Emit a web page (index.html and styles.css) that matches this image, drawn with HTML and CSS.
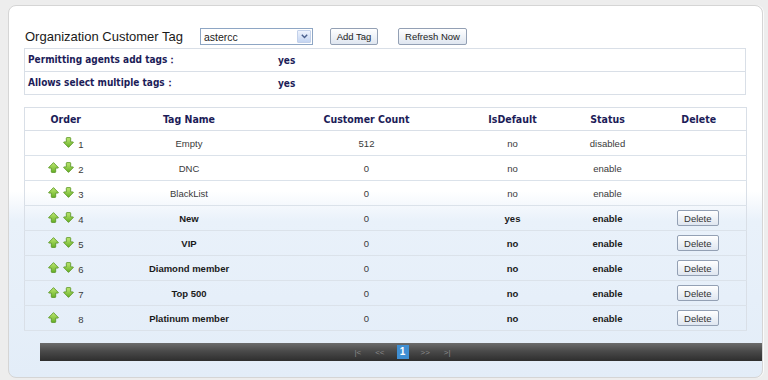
FILE: index.html
```html
<!DOCTYPE html>
<html>
<head>
  <meta charset="utf-8">
  <link rel="stylesheet" href="styles.css">
</head>
<body>
  <svg class="svg-defs" width="0" height="0">
    <defs>
      <linearGradient id="greenFill" x1="0" y1="0" x2="0" y2="1">
        <stop offset="0" stop-color="#bfe873"/>
        <stop offset="1" stop-color="#66b026"/>
      </linearGradient>
      <symbol id="arrowUp" viewBox="0 0 11 11">
        <path d="M5.5 0.6 L10.3 5.5 Q10.5 6.1 9.9 6.1 H7.7 V9.8 Q7.7 10.4 7.1 10.4 H3.9 Q3.3 10.4 3.3 9.8 V6.1 H1.1 Q0.5 6.1 0.7 5.5 Z" fill="url(#greenFill)" stroke="#54921f" stroke-width="0.8"/>
      </symbol>
      <symbol id="arrowDown" viewBox="0 0 11 11">
        <path d="M5.5 10.4 L10.3 5.5 Q10.5 4.9 9.9 4.9 H7.7 V1.2 Q7.7 0.6 7.1 0.6 H3.9 Q3.3 0.6 3.3 1.2 V4.9 H1.1 Q0.5 4.9 0.7 5.5 Z" fill="url(#greenFill)" stroke="#54921f" stroke-width="0.8"/>
      </symbol>
    </defs>
  </svg>

  <div class="panel">
    <div class="toolbar">
      <span class="title">Organization Customer Tag</span>
      <div class="select-box">
        <span class="select-text">astercc</span>
        <span class="select-arrow">
          <svg width="7" height="5" viewBox="0 0 7 5"><path d="M0.8 0.8 L3.5 3.6 L6.2 0.8" fill="none" stroke="#4a5f8c" stroke-width="1.4"/></svg>
        </span>
      </div>
      <button class="btn add-btn">Add Tag</button>
      <button class="btn refresh-btn">Refresh Now</button>
    </div>

    <table class="info-table">
      <tr>
        <td class="info-label">Permitting agents add tags：</td>
        <td class="info-value">yes</td>
      </tr>
      <tr>
        <td class="info-label">Allows select multiple tags：</td>
        <td class="info-value">yes</td>
      </tr>
    </table>

    <table class="tag-table">
      <colgroup>
        <col class="col-order">
        <col class="col-name">
        <col class="col-count">
        <col class="col-default">
        <col class="col-status">
        <col class="col-delete">
      </colgroup>
      <thead>
        <tr>
          <th>Order</th>
          <th>Tag Name</th>
          <th>Customer Count</th>
          <th>IsDefault</th>
          <th>Status</th>
          <th>Delete</th>
        </tr>
      </thead>
      <tbody>
        <tr>
          <td><span class="order-box"><span class="slot"></span><span class="slot"><svg width="11" height="11"><use href="#arrowDown"/></svg></span><span class="num">1</span></span></td>
          <td>Empty</td>
          <td>512</td>
          <td>no</td>
          <td>disabled</td>
          <td></td>
        </tr>
        <tr>
          <td><span class="order-box"><span class="slot"><svg width="11" height="11"><use href="#arrowUp"/></svg></span><span class="slot"><svg width="11" height="11"><use href="#arrowDown"/></svg></span><span class="num">2</span></span></td>
          <td>DNC</td>
          <td>0</td>
          <td>no</td>
          <td>enable</td>
          <td></td>
        </tr>
        <tr>
          <td><span class="order-box"><span class="slot"><svg width="11" height="11"><use href="#arrowUp"/></svg></span><span class="slot"><svg width="11" height="11"><use href="#arrowDown"/></svg></span><span class="num">3</span></span></td>
          <td>BlackList</td>
          <td>0</td>
          <td>no</td>
          <td>enable</td>
          <td></td>
        </tr>
        <tr>
          <td><span class="order-box"><span class="slot"><svg width="11" height="11"><use href="#arrowUp"/></svg></span><span class="slot"><svg width="11" height="11"><use href="#arrowDown"/></svg></span><span class="num">4</span></span></td>
          <td class="strong">New</td>
          <td>0</td>
          <td class="strong">yes</td>
          <td class="strong">enable</td>
          <td><button class="btn delete-btn">Delete</button></td>
        </tr>
        <tr>
          <td><span class="order-box"><span class="slot"><svg width="11" height="11"><use href="#arrowUp"/></svg></span><span class="slot"><svg width="11" height="11"><use href="#arrowDown"/></svg></span><span class="num">5</span></span></td>
          <td class="strong">VIP</td>
          <td>0</td>
          <td class="strong">no</td>
          <td class="strong">enable</td>
          <td><button class="btn delete-btn">Delete</button></td>
        </tr>
        <tr>
          <td><span class="order-box"><span class="slot"><svg width="11" height="11"><use href="#arrowUp"/></svg></span><span class="slot"><svg width="11" height="11"><use href="#arrowDown"/></svg></span><span class="num">6</span></span></td>
          <td class="strong">Diamond member</td>
          <td>0</td>
          <td class="strong">no</td>
          <td class="strong">enable</td>
          <td><button class="btn delete-btn">Delete</button></td>
        </tr>
        <tr>
          <td><span class="order-box"><span class="slot"><svg width="11" height="11"><use href="#arrowUp"/></svg></span><span class="slot"><svg width="11" height="11"><use href="#arrowDown"/></svg></span><span class="num">7</span></span></td>
          <td class="strong">Top 500</td>
          <td>0</td>
          <td class="strong">no</td>
          <td class="strong">enable</td>
          <td><button class="btn delete-btn">Delete</button></td>
        </tr>
        <tr>
          <td><span class="order-box"><span class="slot"><svg width="11" height="11"><use href="#arrowUp"/></svg></span><span class="slot"></span><span class="num">8</span></span></td>
          <td class="strong">Platinum member</td>
          <td>0</td>
          <td class="strong">no</td>
          <td class="strong">enable</td>
          <td><button class="btn delete-btn">Delete</button></td>
        </tr>
      </tbody>
    </table>

    <div class="pager">
      <span class="pager-link">|&lt;</span>
      <span class="pager-link">&lt;&lt;</span>
      <span class="pager-current">1</span>
      <span class="pager-link">&gt;&gt;</span>
      <span class="pager-link">&gt;|</span>
    </div>
  </div>
</body>
</html>
```

FILE: styles.css
```css
body {
  margin: 0;
  padding: 5px 6px 3px 8px;
  background: #ededed;
  font-family: "Liberation Sans", Arial, sans-serif;
  font-size: 9.5px;
  color: #3a3a3a;
}

.svg-defs {
  display: block;
  width: 0;
  height: 0;
}

.panel {
  width: 722px;
  height: 349px;
  padding: 22px 16px 0 15px;
  border: 1px solid #d5d5d5;
  border-radius: 8px;
  background: linear-gradient(to bottom, #ffffff 0, #ffffff 185px, #e9f1fa 215px, #e3edf8 100%);
  box-shadow: 1px 0 0 #fbfbfb;
}

/* Top toolbar */
.toolbar {
  display: flex;
  align-items: center;
  height: 17px;
}

.title {
  width: 176px;
  font-size: 13px;
  color: #1a1a1a;
  padding-left: 1px;
  box-sizing: border-box;
}

.select-box {
  display: flex;
  align-items: center;
  justify-content: space-between;
  width: 113px;
  height: 17px;
  box-sizing: border-box;
  border: 1px solid #8ea6c4;
  background: #fff;
  padding: 0 1px 0 3px;
}

.select-text {
  font-size: 10.5px;
  color: #222;
}

.select-arrow {
  display: flex;
  align-items: center;
  justify-content: center;
  width: 14px;
  height: 13px;
  background: linear-gradient(to bottom, #eef3fd, #c4d5f2);
  border: 1px solid #c3d1ea;
  box-sizing: border-box;
  border-radius: 1px;
}

.btn {
  font-family: "Liberation Sans", Arial, sans-serif;
  font-size: 9.5px;
  color: #222;
  background: linear-gradient(to bottom, #ffffff, #dfe6f0);
  border: 1px solid #93a0b4;
  border-radius: 2px;
  padding: 0;
  height: 17px;
  box-sizing: border-box;
}

.add-btn {
  width: 48px;
  margin-left: 17px;
}

.refresh-btn {
  width: 69px;
  margin-left: 20px;
}

/* Settings table */
.info-table {
  width: 100%;
  margin-top: 3px;
  border-collapse: collapse;
  border: 1px solid #d9dfe7;
}

.info-table td {
  height: 22px;
  padding: 0 3px;
  border-bottom: 1px solid #d9dfe7;
  font-family: "DejaVu Sans Condensed", "DejaVu Sans", Verdana, sans-serif;
  font-stretch: condensed;
  font-weight: bold;
  font-size: 10px;
  color: #1c1c58;
}

.info-label {
  width: 244px;
}

/* Tag table */
.tag-table {
  width: 100%;
  margin-top: 12px;
  border-collapse: collapse;
  border: 1px solid #d9dfe7;
  table-layout: fixed;
}

.col-order { width: 82px; }
.col-name { width: 165px; }
.col-count { width: 190px; }
.col-default { width: 102px; }
.col-status { width: 88px; }
.col-delete { width: 95px; }

.tag-table th {
  height: 22px;
  padding: 0;
  border-bottom: 1px solid #d9dfe7;
  font-family: "DejaVu Sans Condensed", "DejaVu Sans", Verdana, sans-serif;
  font-stretch: condensed;
  font-weight: bold;
  font-size: 10.5px;
  color: #1c1c58;
  text-align: center;
}

.tag-table td {
  height: 24px;
  padding: 0;
  border-bottom: 1px solid #dbe2ea;
  text-align: center;
}

.tag-table td.strong {
  font-weight: bold;
  color: #1a1a1a;
}

.order-box {
  display: inline-flex;
  align-items: flex-end;
  gap: 4px;
  margin-left: 2px;
}

.slot {
  display: block;
  width: 11px;
  height: 11px;
}

.slot svg {
  display: block;
}

.num {
  width: 7px;
  margin-bottom: -2px;
  text-align: left;
}

.delete-btn {
  width: 42px;
  height: 16px;
  margin-left: -2px;
  color: #333;
}

/* Pager */
.pager {
  display: flex;
  align-items: center;
  justify-content: center;
  gap: 10px;
  height: 18px;
  margin: 12px -16px 0 16px;
  padding-left: 3px;
  background: linear-gradient(to bottom, #6c6c6c 0, #4a4a4a 45%, #2e2e2e 100%);
  font-size: 8px;
  color: #8a8a8a;
}

.pager-link {
  padding: 0 2px;
}

.pager-current {
  display: inline-block;
  width: 12px;
  height: 14px;
  line-height: 14px;
  text-align: center;
  background: #3f8fd3;
  color: #fff;
  font-weight: bold;
  font-size: 10px;
}
```
